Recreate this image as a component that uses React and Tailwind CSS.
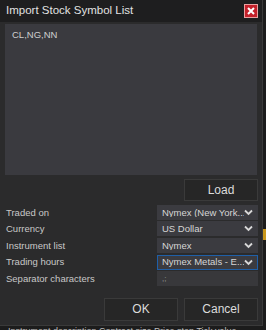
import React from 'react';

const font = { fontFamily: '"Liberation Sans", Arial, sans-serif' };

const Chevron = () => (
    <svg width="9" height="7" viewBox="0 0 9 7" className="shrink-0">
        <path d="M1 1.5 L4.5 5 L8 1.5" stroke="#d8d8d8" strokeWidth="1.8" fill="none" />
    </svg>
);

const SelectBox = ({ value, focused }) => (
    <div
        className={`flex items-center justify-between w-[101px] h-[15px] pl-[4px] pr-[4px] bg-[#3b3b40] text-[9.5px] text-[#d6d6d6] ${
            focused ? 'border border-[#1f5fa8]' : 'border border-transparent'
        }`}
    >
        <span className="whitespace-nowrap overflow-hidden leading-none">{value}</span>
        <Chevron />
    </div>
);

const Row = ({ label, children }) => (
    <div className="flex items-center justify-between h-[16.6px] pl-[6px] pr-[4px]">
        <span className="text-[9.5px] text-[#c8c8c8] leading-none">{label}</span>
        {children}
    </div>
);

export default function App() {
    return (
        <div className="w-[266px] h-[330px] bg-[#1c1c1c] overflow-hidden relative" style={font}>
            <div className="w-[263px] h-[326px] bg-[#2b2b2c] border-r border-b border-[#3a3a3a] flex flex-col">
                {/* Title bar */}
                <div className="flex items-center justify-between h-[22px] bg-[#1e1e1f] pl-[6px] pr-[4px]">
                    <span className="text-[11.5px] text-[#e2e2e2] leading-none">Import Stock Symbol List</span>
                    <div className="w-[14px] h-[14px] bg-[#c4202a] border border-[#e9a0a0] flex items-center justify-center">
                        <svg width="8" height="8" viewBox="0 0 8 8">
                            <path d="M1 1 L7 7 M7 1 L1 7" stroke="#ffffff" strokeWidth="2" />
                        </svg>
                    </div>
                </div>

                {/* Symbol text area */}
                <div className="mx-[5px] mt-[2px] h-[151px] bg-[#3a3a3f] px-[7px] pt-[6px]">
                    <div className="text-[9.5px] text-[#cfcfcf] leading-none">CL,NG,NN</div>
                </div>

                <div className="flex justify-end pr-[4px] mt-[4px]">
                    <div className="w-[74px] h-[22px] bg-[#262626] border border-[#3a3a3a] flex items-center justify-center text-[12px] text-[#dcdcdc]">
                        Load
                    </div>
                </div>

                <div className="flex flex-col mt-[3px]">
                    <Row label="Traded on"><SelectBox value="Nymex (New York..." /></Row>
                    <Row label="Currency"><SelectBox value="US Dollar" /></Row>
                    <Row label="Instrument list"><SelectBox value="Nymex" /></Row>
                    <Row label="Trading hours"><SelectBox value="Nymex Metals - E..." focused /></Row>
                    <Row label="Separator characters">
                        <div className="w-[101px] h-[15px] bg-[#38383b] pl-[5px] text-[8px] text-[#9a9a9a] leading-none flex items-center">,;</div>
                    </Row>
                </div>

                <div className="flex justify-end gap-[6px] pr-[4px] mt-[11px]">
                    <div className="w-[74px] h-[23px] bg-[#262626] border border-[#3a3a3a] flex items-center justify-center text-[12px] text-[#dcdcdc]">
                        OK
                    </div>
                    <div className="w-[74px] h-[23px] bg-[#262626] border border-[#3a3a3a] flex items-center justify-center text-[12px] text-[#dcdcdc]">
                        Cancel
                    </div>
                </div>
            </div>
            <div className="absolute right-0 top-[229px] w-[3px] h-[11px] bg-[#c8961a]" />
            <div className="absolute left-[8px] top-[327px] text-[9px] text-[#bdbdbd] whitespace-nowrap leading-none">
                Instrument description  Contract size  Price step  Tick value
            </div>
        </div>
    );
}
